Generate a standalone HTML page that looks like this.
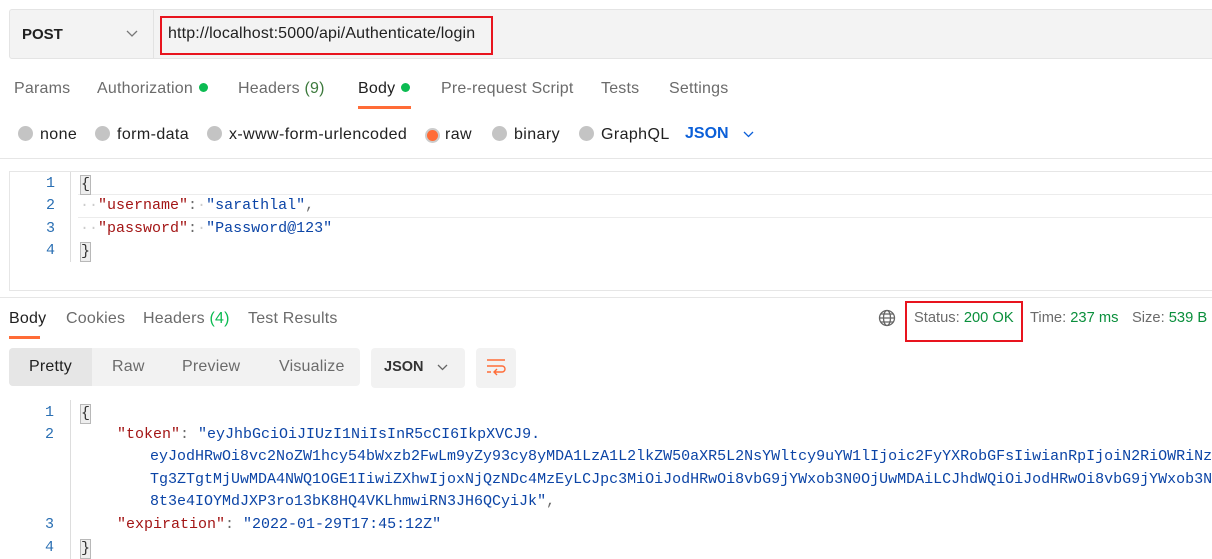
<!DOCTYPE html>
<html><head><style>
body{margin:0;width:1212px;height:559px;overflow:hidden;background:#fff;font-family:"Liberation Sans",sans-serif;font-size:15.5px;color:#6b6b6b;position:relative}
.a{position:absolute;white-space:nowrap}
.m{font-family:"Liberation Mono",monospace;font-size:15px}
.dot{display:inline-block;width:9px;height:9px;border-radius:50%;background:#0cbb52;margin-left:6px;vertical-align:1px}
.r{display:inline-block;width:15px;height:15px;border-radius:50%;background:#c4c4c4;vertical-align:-2px;margin-right:7px}
.k{color:#a31515}.s{color:#0b44a6}.n{color:#2a6fb3}
.ln{position:absolute;width:20px;text-align:right;color:#2a6fb3;font-family:"Liberation Mono",monospace;font-size:15px}
.br{display:inline-block;border:1px solid #b8b8b8;background:#eee;color:#333;line-height:18px}
.t{font-size:16px;letter-spacing:0.2px}
.rl{font-size:16px;letter-spacing:0.4px;color:#212121}
</style></head><body>
<div class="a" style="left:9px;top:9px;width:1210px;height:48px;background:#f3f3f3;border:1px solid #e4e4e4;border-radius:3px"></div>
<div class="a" style="left:153px;top:10px;width:1px;height:48px;background:#e2e2e2"></div>
<div class="a" style="left:22px;top:26px;font-weight:bold;color:#212121;font-size:15px">POST</div>
<svg class="a" style="left:126px;top:30px" width="12" height="8"><path d="M1 1 L6 6 L11 1" fill="none" stroke="#777" stroke-width="1.3"/></svg>
<div class="a" style="left:160px;top:16px;width:329px;height:35px;border:2px solid #e8141e"></div>
<div class="a" style="left:168px;top:25px;color:#212121;font-size:16px;letter-spacing:0.15px">http://localhost:5000/api/Authenticate/login</div>

<div class="a t" style="left:14px;top:80px">Params</div>
<div class="a t" style="left:97px;top:80px">Authorization<span class="dot"></span></div>
<div class="a t" style="left:238px;top:80px">Headers <span style="color:#3d7a3d">(9)</span></div>
<div class="a t" style="left:358px;top:80px;color:#212121">Body<span class="dot"></span></div>
<div class="a" style="left:358px;top:106px;width:53px;height:3px;background:#ff6c37"></div>
<div class="a t" style="left:441px;top:80px">Pre-request Script</div>
<div class="a t" style="left:601px;top:80px">Tests</div>
<div class="a t" style="left:669px;top:80px">Settings</div>

<div class="a rl" style="left:18px;top:126px"><span class="r"></span>none</div>
<div class="a rl" style="left:95px;top:126px"><span class="r"></span>form-data</div>
<div class="a rl" style="left:207px;top:126px"><span class="r"></span>x-www-form-urlencoded</div>
<div class="a rl" style="left:425px;top:126px"><span class="r" style="background:#ff6c37;box-shadow:0 0 0 2px #ccc;width:11px;height:11px;margin-left:2px"></span>raw</div>
<div class="a rl" style="left:492px;top:126px"><span class="r"></span>binary</div>
<div class="a rl" style="left:579px;top:126px"><span class="r"></span>GraphQL</div>
<div class="a" style="left:685px;top:125px;color:#0b5fd8;font-weight:bold;font-size:16px">JSON</div>
<svg class="a" style="left:743px;top:131px" width="11" height="7"><path d="M1 1 L5.5 5.5 L10 1" fill="none" stroke="#0b5fd8" stroke-width="1.3"/></svg>
<div class="a" style="left:0;top:158px;width:1212px;height:1px;background:#e6e6e6"></div>

<div class="a" style="left:9px;top:171px;width:1210px;height:118px;border:1px solid #e6e6e6;border-right:none"></div>
<div class="a" style="left:78px;top:194px;width:1140px;height:22px;border-top:1px solid #ececec;border-bottom:1px solid #ececec"></div>
<div class="a" style="left:70px;top:172px;width:1px;height:90px;background:#ddd"></div>
<div class="ln" style="left:35px;top:175px">1</div>
<div class="ln" style="left:35px;top:197px">2</div>
<div class="ln" style="left:35px;top:220px">3</div>
<div class="ln" style="left:35px;top:242px">4</div>
<div class="a m" style="left:80px;top:175px"><span class="br">{</span></div>
<div class="a m" style="left:80px;top:197px"><span style="color:#ccc">··</span><span class="k">"username"</span>:<span style="color:#ccc">·</span><span class="s">"sarathlal"</span>,</div>
<div class="a m" style="left:80px;top:220px"><span style="color:#ccc">··</span><span class="k">"password"</span>:<span style="color:#ccc">·</span><span class="s">"Password@123"</span></div>
<div class="a m" style="left:80px;top:242px"><span class="br">}</span></div>
<div class="a" style="left:0;top:297px;width:1212px;height:1px;background:#e6e6e6"></div>

<div class="a t" style="left:9px;top:310px;color:#212121">Body</div>
<div class="a" style="left:9px;top:336px;width:31px;height:3px;background:#ff6c37"></div>
<div class="a t" style="left:66px;top:310px">Cookies</div>
<div class="a t" style="left:143px;top:310px">Headers <span style="color:#0cbb52">(4)</span></div>
<div class="a t" style="left:248px;top:310px">Test Results</div>
<svg class="a" style="left:878px;top:309px" width="18" height="18" fill="none" stroke="#666" stroke-width="1.3"><circle cx="9" cy="9" r="7.5"/><ellipse cx="9" cy="9" rx="3.5" ry="7.5"/><path d="M1.5 9H16.5M2.5 5H15.5M2.5 13H15.5"/></svg>
<div class="a" style="left:905px;top:301px;width:114px;height:37px;border:2px solid #e8141e"></div>
<div class="a" style="left:914px;top:310px;font-size:14.7px">Status: <span style="color:#0a8f3c">200 OK</span></div>
<div class="a" style="left:1030px;top:310px;font-size:14.7px">Time: <span style="color:#0a8f3c">237 ms</span></div>
<div class="a" style="left:1132px;top:310px;font-size:14.7px">Size: <span style="color:#0a8f3c">539 B</span></div>

<div class="a" style="left:9px;top:348px;width:351px;height:38px;background:#f2f2f2;border-radius:4px"></div>
<div class="a" style="left:9px;top:348px;width:83px;height:38px;background:#e6e6e6;border-radius:4px 0 0 4px"></div>
<div class="a t" style="left:29px;top:358px;color:#212121">Pretty</div>
<div class="a t" style="left:112px;top:358px">Raw</div>
<div class="a t" style="left:182px;top:358px">Preview</div>
<div class="a t" style="left:279px;top:358px">Visualize</div>
<div class="a" style="left:371px;top:348px;width:94px;height:40px;background:#f2f2f2;border-radius:4px"></div>
<div class="a" style="left:384px;top:359px;color:#333;font-weight:bold;font-size:14.5px">JSON</div>
<svg class="a" style="left:437px;top:364px" width="11" height="7"><path d="M1 1 L5.5 5.5 L10 1" fill="none" stroke="#666" stroke-width="1.3"/></svg>
<div class="a" style="left:476px;top:348px;width:40px;height:40px;background:#f2f2f2;border-radius:4px"></div>
<svg class="a" style="left:486px;top:358px" width="20" height="20" fill="none" stroke="#ff6c37" stroke-width="1.4"><path d="M1 2H19M1 8H16a3 3 0 0 1 0 6H9M11 11L8 14L11 17M1 14H5"/></svg>

<div class="a" style="left:70px;top:400px;width:1px;height:159px;background:#ddd"></div>
<div class="ln" style="left:34px;top:404px">1</div>
<div class="ln" style="left:34px;top:426px">2</div>
<div class="ln" style="left:34px;top:516px">3</div>
<div class="ln" style="left:34px;top:539px">4</div>
<div class="a m" style="left:80px;top:404px"><span class="br">{</span></div>
<div class="a m" style="left:117px;top:426px"><span class="k">"token"</span>: <span class="s">"eyJhbGciOiJIUzI1NiIsInR5cCI6IkpXVCJ9.</span></div>
<div class="a m s" style="left:150px;top:448px">eyJodHRwOi8vc2NoZW1hcy54bWxzb2FwLm9yZy93cy8yMDA1LzA1L2lkZW50aXR5L2NsYWltcy9uYW1lIjoic2FyYXRobGFsIiwianRpIjoiN2RiOWRiNz</div>
<div class="a m s" style="left:150px;top:471px">Tg3ZTgtMjUwMDA4NWQ1OGE1IiwiZXhwIjoxNjQzNDc4MzEyLCJpc3MiOiJodHRwOi8vbG9jYWxob3N0OjUwMDAiLCJhdWQiOiJodHRwOi8vbG9jYWxob3N0</div>
<div class="a m" style="left:150px;top:493px"><span class="s">8t3e4IOYMdJXP3ro13bK8HQ4VKLhmwiRN3JH6QCyiJk"</span>,</div>
<div class="a m" style="left:117px;top:516px"><span class="k">"expiration"</span>: <span class="s">"2022-01-29T17:45:12Z"</span></div>
<div class="a m" style="left:80px;top:539px"><span class="br">}</span></div>
</body></html>
